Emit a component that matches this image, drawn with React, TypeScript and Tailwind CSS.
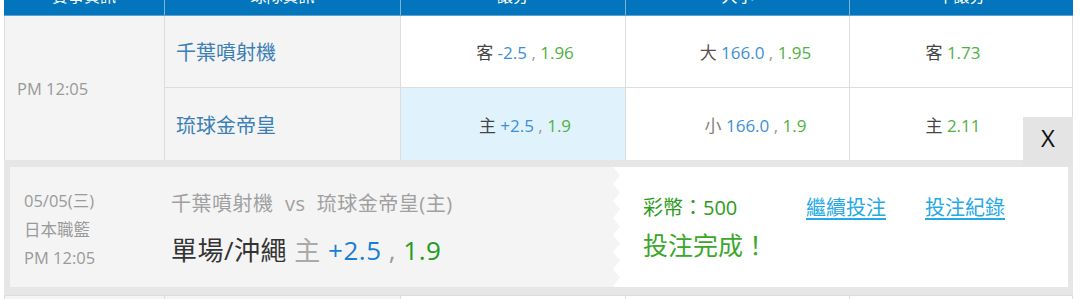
import React from "react";

const cols = "grid grid-cols-[161px_236px_225px_224px_223px]";

function Odds({
  label,
  line,
  price,
  labelColor = "text-[#444]",
}: {
  label: string;
  line?: string;
  price: string;
  labelColor?: string;
}) {
  return (
    <span className="text-[17px]">
      <span className={labelColor}>{label}</span>{" "}
      {line && (
        <>
          <span className="text-[#3f8fd2]">{line}</span>
          <span className="text-[#999]"> , </span>
        </>
      )}
      <span className="text-[#52b043]">{price}</span>
    </span>
  );
}

function Zigzag() {
  // gray teeth pointing into the white half of the panel
  let pts = "0,0";
  for (let y = 0; y < 120; y += 17) {
    pts += ` 7,${y + 8.5} 0,${Math.min(y + 17, 120)}`;
  }
  return (
    <svg width="7" height="120" viewBox="0 0 7 120" className="block shrink-0 bg-white">
      <polygon points={pts} fill="#f4f4f4" />
    </svg>
  );
}

export default function App() {
  return (
    <div className="h-[299px] w-[1080px] overflow-hidden bg-white font-['Open_Sans','Noto_Sans_CJK_TC',sans-serif]">
      <div className="ml-[4px] w-[1069px]">
        {/* ===== HEADER ===== */}
        <div className={`${cols} -mt-[24px] h-[40px] border-b border-[#5fa0d3] bg-[#0375bc] text-[16px] text-white`}>
          <div className="flex items-center justify-center border-r border-[#7fb0d8]">賽事資訊</div>
          <div className="flex items-center justify-center border-r border-[#7fb0d8]">球隊資訊</div>
          <div className="flex items-center justify-center border-r border-[#7fb0d8]">讓分</div>
          <div className="flex items-center justify-center border-r border-[#7fb0d8]">大小</div>
          <div className="flex items-center justify-center">不讓分</div>
        </div>

        {/* ===== MATCH ROWS ===== */}
        <div className={`${cols} grid-rows-[72px_72px]`}>
          <div className="row-span-2 flex items-center border-l border-r border-[#ddd] bg-[#f4f4f4] pt-[2px] pl-[12px] text-[16.5px] text-[#999]">
            PM 12:05
          </div>
          <div className="flex items-center border-r border-b border-[#ddd] bg-[#f4f4f4] pt-[3px] pl-[11px] text-[20px] text-[#3b7fb6]">
            千葉噴射機
          </div>
          <div className="flex items-center justify-center border-r border-b border-[#ddd] bg-white pt-[3px] pl-[24px]">
            <Odds label="客" line="-2.5" price="1.96" />
          </div>
          <div className="flex items-center justify-center border-r border-b border-[#ddd] bg-white pt-[3px] pl-[36px]">
            <Odds label="大" line="166.0" price="1.95" labelColor="text-[#5a4e4e]" />
          </div>
          <div className="flex items-center justify-center border-r border-b border-[#ddd] bg-white pt-[3px] pr-[16px]">
            <Odds label="客" price="1.73" />
          </div>

          <div className="flex items-center border-r border-[#ddd] bg-[#f4f4f4] pt-[3px] pl-[11px] text-[20px] text-[#3b7fb6]">
            琉球金帝皇
          </div>
          <div className="flex items-center justify-center border-r border-[#ddd] bg-[#e0f3fc] pt-[3px] pl-[24px]">
            <Odds label="主" line="+2.5" price="1.9" />
          </div>
          <div className="flex items-center justify-center border-r border-[#ddd] bg-white pt-[3px] pl-[36px]">
            <Odds label="小" line="166.0" price="1.9" labelColor="text-[#8a7c7c]" />
          </div>
          <div className="flex items-center justify-center border-r border-[#ddd] bg-white pt-[3px] pr-[16px]">
            <Odds label="主" price="2.11" />
          </div>
        </div>

        {/* ===== BET CONFIRMATION ===== */}
        <div className="relative bg-[#e6e6e6] pt-[7px] pr-[5px] pb-[8px] pl-[6px]">
          <div className="absolute -top-[43px] right-0 flex h-[50px] w-[50px] justify-center bg-[#e4e4e4] pt-[6px] text-[24px] leading-[30px] text-[#111]">
            X
          </div>

          <div className="flex h-[120px]">
            <div className="flex w-[603px] bg-[#f4f4f4] pl-[14px]">
              <div className="w-[147px] pt-[20px] text-[16.5px] leading-[28.5px] text-[#9a9a9a]">
                <div>05/05(三)</div>
                <div>日本職籃</div>
                <div>PM 12:05</div>
              </div>
              <div className="pt-[23px]">
                <div className="text-[20px] leading-[28px] tracking-[0.5px] text-[#a0a0a0]">
                  千葉噴射機&nbsp; vs&nbsp; 琉球金帝皇(主)
                </div>
                <div className="mt-[15px] text-[26px] leading-[34px] tracking-[0.5px]">
                  <span className="text-[#333]">單場/沖繩</span>{" "}
                  <span className="text-[#aaa]">主</span>{" "}
                  <span className="text-[#1a7fd4]">+2.5</span>
                  <span className="text-[#999]"> , </span>
                  <span className="text-[#1f9c1f]">1.9</span>
                </div>
              </div>
            </div>
            <Zigzag />
            <div className="flex-1 bg-white pt-[27px] pl-[23px]">
              <div className="flex text-[20px] leading-[28px]">
                <span className="w-[163px] text-[#2e9a1e]">彩幣：500</span>
                <a className="w-[119px] text-[#25a8e6] underline underline-offset-[3px]">繼續投注</a>
                <a className="text-[#25a8e6] underline underline-offset-[3px]">投注紀錄</a>
              </div>
              <div className="mt-[6px] text-[25px] leading-[34px] text-[#3ca72b]">投注完成！</div>
            </div>
          </div>
        </div>

        {/* ===== NEXT ROW ===== */}
        <div className={`${cols} h-[40px] border-t border-[#ddd]`}>
          <div className="border-l border-r border-[#ddd] bg-[#f4f4f4]" />
          <div className="border-r border-[#ddd] bg-[#f4f4f4]" />
          <div className="border-r border-[#ddd] bg-white" />
          <div className="border-r border-[#ddd] bg-white" />
          <div className="border-r border-[#ddd] bg-white" />
        </div>
      </div>
    </div>
  );
}
